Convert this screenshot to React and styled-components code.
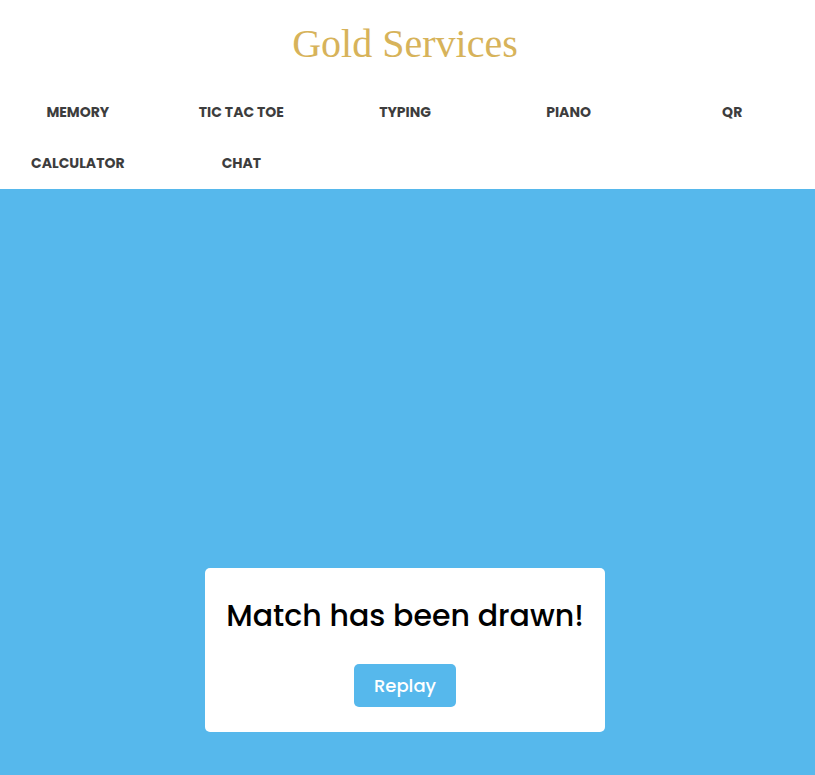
import React from "react";
import styled, { createGlobalStyle } from "styled-components";

const GlobalStyle = createGlobalStyle`
  * { box-sizing: border-box; }
  body {
    margin: 0;
    background: #56b8ec;
    font-family: Poppins, Inter, "Open Sans", sans-serif;
  }
`;

const Page = styled.div`
  display: flex;
  flex-direction: column;
  min-height: 100vh;
`;

const Header = styled.header`
  background: #fff;
  padding: 20px 5px 0 0;
`;

const Title = styled.h1`
  margin: 0;
  color: #d7b35a;
  font: 400 40px/48px "Liberation Serif", "Times New Roman", serif;
  text-align: center;
`;

const Nav = styled.nav`
  display: grid;
  grid-template-columns: repeat(5, 1fr);
  column-gap: 8px;
  padding-top: 19px;
`;

const NavLink = styled.a`
  padding: 14px 0;
  color: #3d3d3d;
  font-size: 14px;
  font-weight: 700;
  line-height: 23px;
  text-align: center;
  text-decoration: none;
  text-transform: uppercase;
`;

const Stage = styled.main`
  flex: 1;
  display: flex;
  align-items: flex-end;
  justify-content: center;
  padding: 0 5px 43px 0;
`;

const ResultBox = styled.section`
  display: flex;
  flex-direction: column;
  align-items: center;
  width: 100%;
  max-width: 400px;
  padding: 25px 20px;
  border-radius: 5px;
  background: #fff;
`;

const Message = styled.p`
  margin: 0 0 26px;
  color: #000;
  font-size: 30px;
  font-weight: 500;
  line-height: 45px;
  text-align: center;
`;

const ReplayButton = styled.button`
  padding: 8px 20px;
  border: 0;
  border-radius: 5px;
  background: #56b8ec;
  color: #fff;
  font: inherit;
  font-size: 18px;
  font-weight: 500;
  line-height: 27px;
  cursor: pointer;
`;

const services = ["Memory", "Tic Tac Toe", "Typing", "Piano", "QR", "Calculator", "Chat"];

export default function App() {
  return (
    <>
      <GlobalStyle />
      <Page>
        <Header>
          <Title>Gold Services</Title>
          <Nav aria-label="Services">
            {services.map((name) => (
              <NavLink key={name} href="#">{name}</NavLink>
            ))}
          </Nav>
        </Header>
        <Stage>
          <ResultBox>
            <Message>Match has been drawn!</Message>
            <ReplayButton type="button">Replay</ReplayButton>
          </ResultBox>
        </Stage>
      </Page>
    </>
  );
}
